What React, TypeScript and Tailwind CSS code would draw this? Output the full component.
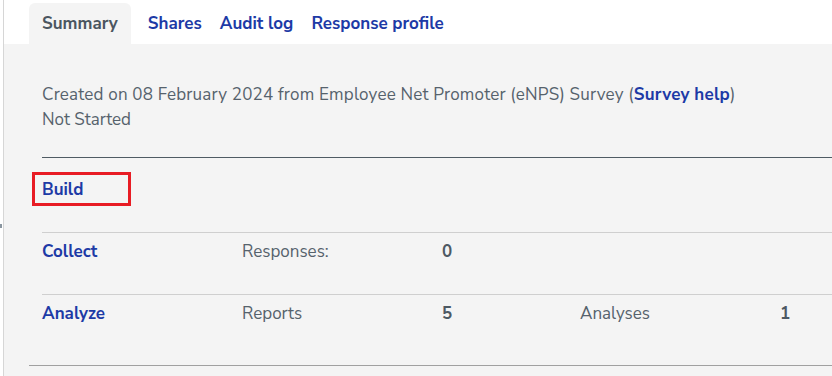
import React from 'react';

const font = { fontFamily: '"Nunito Sans", Lato, "Open Sans", sans-serif' };

const Row = ({ label, cells, h }: { label: string; cells: [string, string][]; h: string }) => (
  <div className={`flex border-t border-[#cfcfcf] pt-[6px] ${h}`}>
    <div className="w-[200px] font-bold text-[#1d3aa6]">{label}</div>
    {cells.map(([k, v], i) => (
      <React.Fragment key={i}>
        <div className="w-[200px]">{k}</div>
        <div className="w-[138px] font-bold text-[#4d5963]">{v}</div>
      </React.Fragment>
    ))}
  </div>
);

export default function App() {
  return (
    <div className="flex h-[376px] w-[832px] overflow-hidden bg-white text-[17px] leading-[25px] text-[#56626c]" style={font}>
      <div className="relative w-[3px] shrink-0">
        <div className="absolute left-0 top-[224px] h-[4px] w-[2px] bg-[#8a96a0]" />
      </div>
      <div className="flex flex-1 flex-col border-l border-[#d6d6d6]">
        <div className="flex h-[44px] shrink-0 items-end pl-[25px] text-[17px] font-bold">
          <div className="flex h-[41px] items-center rounded-t-[6px] bg-[#f4f4f4] px-[13px] text-[#4b5660]">Summary</div>
          <div className="ml-[17px] flex h-[41px] items-center text-[#1d3aa6]">Shares</div>
          <div className="ml-[18px] flex h-[41px] items-center text-[#1d3aa6]">Audit log</div>
          <div className="ml-[18px] flex h-[41px] items-center text-[#1d3aa6]">Response profile</div>
        </div>
        <div className="flex-1 bg-[#f4f4f4] pt-[38px]">
          <div className="pl-[38px]">
            <p className="tracking-[0.2px]">
              Created on 08 February 2024 from Employee Net Promoter (eNPS) Survey (
              <span className="font-bold text-[#1d3aa6]">Survey help</span>)
            </p>
            <p>Not Started</p>
            <div className="mt-[25px] border-t border-[#4f5b63]" />
            <div className="mt-[14px] h-[60px]">
              <div className="-ml-[10px] flex h-[34px] w-[99px] items-center border-[3px] border-[#e81c24] pl-[7px] font-bold text-[#1d3aa6]">
                Build
              </div>
            </div>
            <Row label="Collect" cells={[['Responses:', '0']]} h="h-[62px]" />
            <Row label="Analyze" cells={[['Reports', '5'], ['Analyses', '1']]} h="h-[71px]" />
          </div>
          <div className="ml-[25px] border-t border-[#a0a0a0]" />
        </div>
      </div>
    </div>
  );
}
